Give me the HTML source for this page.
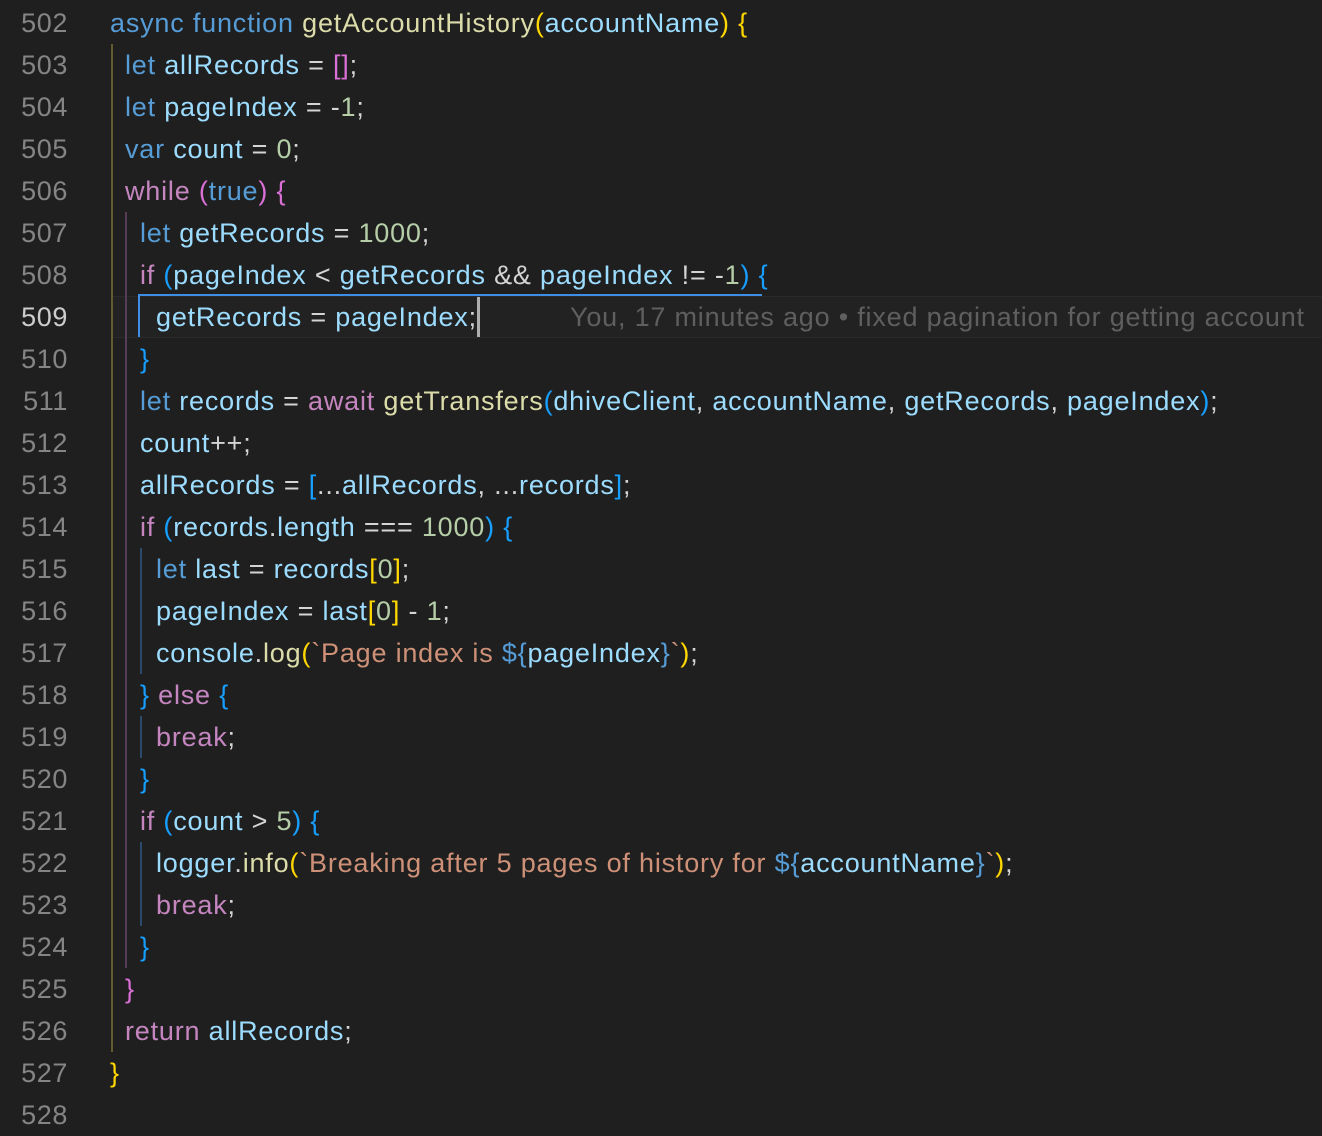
<!DOCTYPE html>
<html><head><meta charset="utf-8"><style>
body{margin:0;width:1322px;height:1108px;background:#1f1f1f;overflow:hidden;position:relative;font-family:"Liberation Sans",sans-serif;font-size:27px;}
.l{position:absolute;left:0;height:42px;line-height:42px;white-space:pre;width:1322px}
.n{position:absolute;right:1254px;color:#858585;letter-spacing:0.6px}
.c{position:absolute;color:#d4d4d4;letter-spacing:0.8px}
.k{color:#569cd6}.p{color:#c586c0}.f{color:#dcdcaa}.v{color:#9cdcfe}.d{color:#b5cea8}.s{color:#ce9178}
.b1{color:#ffd700}.b2{color:#da70d6}.b3{color:#179fff}.o{color:#d4d4d4}
.g{position:absolute;width:1px}
</style></head><body>
<div style="position:absolute;left:113px;top:296px;width:1209px;height:40px;background:#222;border-top:1px solid #2a2a2a;border-bottom:1px solid #2a2a2a"></div>
<div class="g" style="left:111px;top:44px;height:1008px;background:#625b2e;width:2px"></div>
<div class="g" style="left:125px;top:212px;height:756px;background:#583c58;width:2px"></div>
<div class="g" style="left:140px;top:548px;height:126px;background:#2b4a6b;width:2px"></div>
<div class="g" style="left:140px;top:716px;height:42px;background:#2b4a6b;width:2px"></div>
<div class="g" style="left:140px;top:842px;height:84px;background:#2b4a6b;width:2px"></div>
<div style="position:absolute;left:138px;top:294px;width:624px;height:2px;background:#3f8ee6"></div>
<div style="position:absolute;left:138px;top:294px;width:2px;height:43px;background:#3f8ee6"></div>
<div style="position:absolute;left:477px;top:297px;width:3px;height:40px;background:#aeafad"></div>

<div class="l" style="top:2px"><span class="n">502</span><span class="c" style="left:110px"><span class="k">async function</span> <span class="f">getAccountHistory</span><span class="b1">(</span><span class="v">accountName</span><span class="b1">)</span> <span class="b1">{</span></span></div>
<div class="l" style="top:44px"><span class="n">503</span><span class="c" style="left:125px"><span class="k">let</span> <span class="v">allRecords</span> = <span class="b2">[]</span>;</span></div>
<div class="l" style="top:86px"><span class="n">504</span><span class="c" style="left:125px"><span class="k">let</span> <span class="v">pageIndex</span> = -<span class="d">1</span>;</span></div>
<div class="l" style="top:128px"><span class="n">505</span><span class="c" style="left:125px"><span class="k">var</span> <span class="v">count</span> = <span class="d">0</span>;</span></div>
<div class="l" style="top:170px"><span class="n">506</span><span class="c" style="left:125px"><span class="p">while</span> <span class="b2">(</span><span class="k">true</span><span class="b2">)</span> <span class="b2">{</span></span></div>
<div class="l" style="top:212px"><span class="n">507</span><span class="c" style="left:140px"><span class="k">let</span> <span class="v">getRecords</span> = <span class="d">1000</span>;</span></div>
<div class="l" style="top:254px"><span class="n">508</span><span class="c" style="left:140px"><span class="p">if</span> <span class="b3">(</span><span class="v">pageIndex</span> &lt; <span class="v">getRecords</span> &amp;&amp; <span class="v">pageIndex</span> != -<span class="d">1</span><span class="b3">)</span> <span class="b3">{</span></span></div>
<div class="l" style="top:296px"><span class="n" style="color:#cccccc">509</span><span class="c" style="left:156px"><span class="v">getRecords</span> = <span class="v">pageIndex</span>;</span><span class="c" style="left:570px;color:#5f5f5f">You, 17 minutes ago • fixed pagination for getting account</span></div>
<div class="l" style="top:338px"><span class="n">510</span><span class="c" style="left:140px"><span class="b3">}</span></span></div>
<div class="l" style="top:380px"><span class="n">511</span><span class="c" style="left:140px"><span class="k">let</span> <span class="v">records</span> = <span class="p">await</span> <span class="f">getTransfers</span><span class="b3">(</span><span class="v">dhiveClient</span>, <span class="v">accountName</span>, <span class="v">getRecords</span>, <span class="v">pageIndex</span><span class="b3">)</span>;</span></div>
<div class="l" style="top:422px"><span class="n">512</span><span class="c" style="left:140px"><span class="v">count</span>++;</span></div>
<div class="l" style="top:464px"><span class="n">513</span><span class="c" style="left:140px"><span class="v">allRecords</span> = <span class="b3">[</span>...<span class="v">allRecords</span>, ...<span class="v">records</span><span class="b3">]</span>;</span></div>
<div class="l" style="top:506px"><span class="n">514</span><span class="c" style="left:140px"><span class="p">if</span> <span class="b3">(</span><span class="v">records</span>.<span class="v">length</span> === <span class="d">1000</span><span class="b3">)</span> <span class="b3">{</span></span></div>
<div class="l" style="top:548px"><span class="n">515</span><span class="c" style="left:156px"><span class="k">let</span> <span class="v">last</span> = <span class="v">records</span><span class="b1">[</span><span class="d">0</span><span class="b1">]</span>;</span></div>
<div class="l" style="top:590px"><span class="n">516</span><span class="c" style="left:156px"><span class="v">pageIndex</span> = <span class="v">last</span><span class="b1">[</span><span class="d">0</span><span class="b1">]</span> - <span class="d">1</span>;</span></div>
<div class="l" style="top:632px"><span class="n">517</span><span class="c" style="left:156px"><span class="v">console</span>.<span class="f">log</span><span class="b1">(</span><span class="s">`Page index is </span><span class="k">${</span><span class="v">pageIndex</span><span class="k">}</span><span class="s">`</span><span class="b1">)</span>;</span></div>
<div class="l" style="top:674px"><span class="n">518</span><span class="c" style="left:140px"><span class="b3">}</span> <span class="p">else</span> <span class="b3">{</span></span></div>
<div class="l" style="top:716px"><span class="n">519</span><span class="c" style="left:156px"><span class="p">break</span>;</span></div>
<div class="l" style="top:758px"><span class="n">520</span><span class="c" style="left:140px"><span class="b3">}</span></span></div>
<div class="l" style="top:800px"><span class="n">521</span><span class="c" style="left:140px"><span class="p">if</span> <span class="b3">(</span><span class="v">count</span> &gt; <span class="d">5</span><span class="b3">)</span> <span class="b3">{</span></span></div>
<div class="l" style="top:842px"><span class="n">522</span><span class="c" style="left:156px"><span class="v">logger</span>.<span class="f">info</span><span class="b1">(</span><span class="s">`Breaking after 5 pages of history for </span><span class="k">${</span><span class="v">accountName</span><span class="k">}</span><span class="s">`</span><span class="b1">)</span>;</span></div>
<div class="l" style="top:884px"><span class="n">523</span><span class="c" style="left:156px"><span class="p">break</span>;</span></div>
<div class="l" style="top:926px"><span class="n">524</span><span class="c" style="left:140px"><span class="b3">}</span></span></div>
<div class="l" style="top:968px"><span class="n">525</span><span class="c" style="left:125px"><span class="b2">}</span></span></div>
<div class="l" style="top:1010px"><span class="n">526</span><span class="c" style="left:125px"><span class="p">return</span> <span class="v">allRecords</span>;</span></div>
<div class="l" style="top:1052px"><span class="n">527</span><span class="c" style="left:110px"><span class="b1">}</span></span></div>
<div class="l" style="top:1094px"><span class="n">528</span></div>
</body></html>
